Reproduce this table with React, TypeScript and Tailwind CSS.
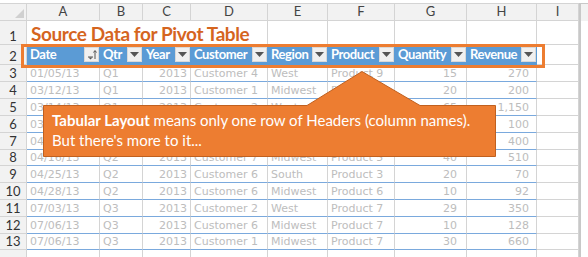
import React from "react";

// column widths: row-number gutter, A..I, then the scrollbar edge
const colW = [
  "w-[27px]",
  "w-[73px]",
  "w-[43px]",
  "w-[48px]",
  "w-[77px]",
  "w-[60px]",
  "w-[67px]",
  "w-[72px]",
  "w-[70px]",
  "w-[42px]",
];

const letters = ["A", "B", "C", "D", "E", "F", "G", "H", "I"];

const headers = ["Date", "Qtr", "Year", "Customer", "Region", "Product", "Quantity", "Revenue"];

// right-aligned columns get their own padding
const align = [
  "justify-start pl-[3px]",
  "justify-start pl-[3px]",
  "justify-end pr-[3px]",
  "justify-start pl-[3px]",
  "justify-start pl-[3px]",
  "justify-start pl-[3px]",
  "justify-end pr-[9px]",
  "justify-end pr-[7px]",
];

const rows = [
  { n: 3, h: "h-[17px]", v: ["01/05/13", "Q1", "2013", "Customer 4", "West", "Product 9", "15", "270"] },
  { n: 4, h: "h-[17px]", v: ["03/12/13", "Q1", "2013", "Customer 1", "Midwest", "Product 2", "20", "200"] },
  { n: 5, h: "h-[17px]", v: ["03/14/13", "Q1", "2013", "Customer 2", "West", "Product 8", "65", "1,150"] },
  { n: 6, h: "h-[17px]", v: ["03/22/13", "Q1", "2013", "Customer 5", "South", "Product 1", "10", "100"] },
  { n: 7, h: "h-[17px]", v: ["04/02/13", "Q2", "2013", "Customer 3", "East", "Product 4", "25", "400"] },
  { n: 8, h: "h-[16px]", v: ["04/16/13", "Q2", "2013", "Customer 7", "Midwest", "Product 5", "40", "510"] },
  { n: 9, h: "h-[17px]", v: ["04/25/13", "Q2", "2013", "Customer 6", "South", "Product 3", "20", "70"] },
  { n: 10, h: "h-[17px]", v: ["04/28/13", "Q2", "2013", "Customer 6", "Midwest", "Product 6", "10", "92"] },
  { n: 11, h: "h-[17px]", v: ["07/03/13", "Q3", "2013", "Customer 2", "West", "Product 7", "29", "350"] },
  { n: 12, h: "h-[17px]", v: ["07/06/13", "Q3", "2013", "Customer 6", "Midwest", "Product 7", "10", "128"] },
  { n: 13, h: "h-[16px]", v: ["07/06/13", "Q3", "2013", "Customer 1", "Midwest", "Product 7", "30", "660"] },
];

function RowNum({ n, h }: { n: number | string; h: string }) {
  return (
    <div
      className={`${colW[0]} ${h} shrink-0 flex items-end justify-center pb-[1px] bg-[#f2f2f2] border-r border-b border-[#d4d4d4] text-[13px] leading-none text-[#333] font-['Lato',sans-serif]`}
    >
      {n}
    </div>
  );
}

function Edge({ h }: { h: string }) {
  return <div className={`${h} flex-1 border-l-2 border-[#c8c8c8] bg-white`} />;
}

function FilterButton({ sorted }: { sorted?: boolean }) {
  return (
    <div className="w-[15px] h-[15px] shrink-0 mr-[1px] bg-[#f0f0f0] border border-[#d9d9d9] flex items-center justify-center">
      {sorted ? (
        <svg width="13" height="13" viewBox="0 0 13 13">
          <path d="M3 9h5" stroke="#555" strokeWidth="1" />
          <path d="M3.5 9.5l2 2 2-2z" fill="#555" />
          <path d="M10 11V3" stroke="#555" strokeWidth="1" />
          <path d="M8.5 4.5L10 2.5l1.5 2" stroke="#555" strokeWidth="1" fill="none" />
        </svg>
      ) : (
        <svg width="9" height="5" viewBox="0 0 9 5">
          <path d="M0 0h9L4.5 5z" fill="#555" />
        </svg>
      )}
    </div>
  );
}

export default function App() {
  return (
    <div className="relative w-[588px] h-[257px] overflow-hidden bg-white font-['DejaVu_Sans',sans-serif]">
      {/* column letters */}
      <div className="flex pt-[3px]">
        <div className={`${colW[0]} h-[18px] shrink-0 bg-[#f2f2f2] border-t border-r border-b border-[#d4d4d4] flex items-end justify-end p-[2px]`}>
          <svg width="9" height="9" viewBox="0 0 9 9">
            <path d="M9 0V9H0z" fill="#d0d0d0" />
          </svg>
        </div>
        {letters.map((l, i) => (
          <div
            key={l}
            className={`${colW[i + 1]} h-[18px] shrink-0 bg-[#f2f2f2] border-t border-r border-b border-[#d4d4d4] flex items-center justify-center text-[13px] text-[#444] font-['Lato',sans-serif]`}
          >
            {l}
          </div>
        ))}
        <div className="h-[18px] flex-1 border-l-2 border-t border-[#c8c8c8] bg-[#f2f2f2]" />
      </div>

      {/* row 1: title */}
      <div className="flex">
        <RowNum n={1} h="h-[24px]" />
        <div className="w-[241px] h-[24px] shrink-0 flex items-end pl-[4px] border-r border-b border-[#d4d4d4] text-[19px] leading-none font-bold text-[#d5651f] font-['Lato',sans-serif] tracking-[-0.4px] pb-[1px]">
          Source Data for Pivot Table
        </div>
        {colW.slice(5).map((w, i) => (
          <div key={i} className={`${w} h-[24px] shrink-0 border-r border-b border-[#d4d4d4]`} />
        ))}
        <Edge h="h-[24px]" />
      </div>

      {/* row 2: table headers */}
      <div className="flex">
        <RowNum n={2} h="h-[20px]" />
        {headers.map((t, i) => (
          <div
            key={t}
            className={`${colW[i + 1]} h-[20px] shrink-0 flex items-center justify-between pl-[3px] bg-[#5b9bd5] border-b border-[#5b9bd5] text-white text-[13px] tracking-[-0.4px] font-bold font-['Lato',sans-serif]`}
          >
            <span>{t}</span>
            <FilterButton sorted={i === 0} />
          </div>
        ))}
        <div className={`${colW[9]} h-[20px] shrink-0 border-r border-b border-[#d4d4d4]`} />
        <Edge h="h-[20px]" />
      </div>

      {/* data rows */}
      {rows.map((r) => (
        <div key={r.n} className="flex">
          <RowNum n={r.n} h={r.h} />
          {r.v.map((c, i) => (
            <div
              key={i}
              className={`${colW[i + 1]} ${r.h} shrink-0 flex items-center ${align[i]} border-r border-b border-r-[#d4d4d4] border-b-[#7aa9dd] ${i === 7 ? "border-r-[#6b9fd8]" : ""} text-[11px] leading-none text-[#bdbdbd] whitespace-nowrap overflow-hidden`}
            >
              {c}
            </div>
          ))}
          <div className={`${colW[9]} ${r.h} shrink-0 border-r border-b border-[#d4d4d4]`} />
          <Edge h={r.h} />
        </div>
      ))}

      {/* row 14, cut off at the bottom */}
      <div className="flex">
        <RowNum n="" h="h-[17px]" />
        {colW.slice(1).map((w, i) => (
          <div key={i} className={`${w} h-[17px] shrink-0 border-r border-[#d4d4d4]`} />
        ))}
        <Edge h="h-[17px]" />
      </div>

      {/* highlight around the header row */}
      <div className="absolute left-[21px] top-[44px] w-[524px] h-[24px] border-[3px] border-[#ed7d31]" />

      {/* callout */}
      <div className="absolute left-[43px] top-[71px] w-[453px] h-[86px]">
        <svg className="absolute inset-0" width="453" height="86" viewBox="0 0 453 86">
          <path
            d="M0.5 34.5H264L319 0.5L377 34.5H452.5V85.5H0.5Z"
            fill="#ed7d31"
            stroke="#c0601f"
            strokeWidth="1"
          />
        </svg>
        <div className="absolute left-[9px] top-[39px] text-white text-[15px] leading-[20px] font-['Lato',sans-serif]">
          <p>
            <span className="font-bold">Tabular Layout</span> means only one row of Headers (column names).
          </p>
          <p>But there's more to it...</p>
        </div>
      </div>
    </div>
  );
}
